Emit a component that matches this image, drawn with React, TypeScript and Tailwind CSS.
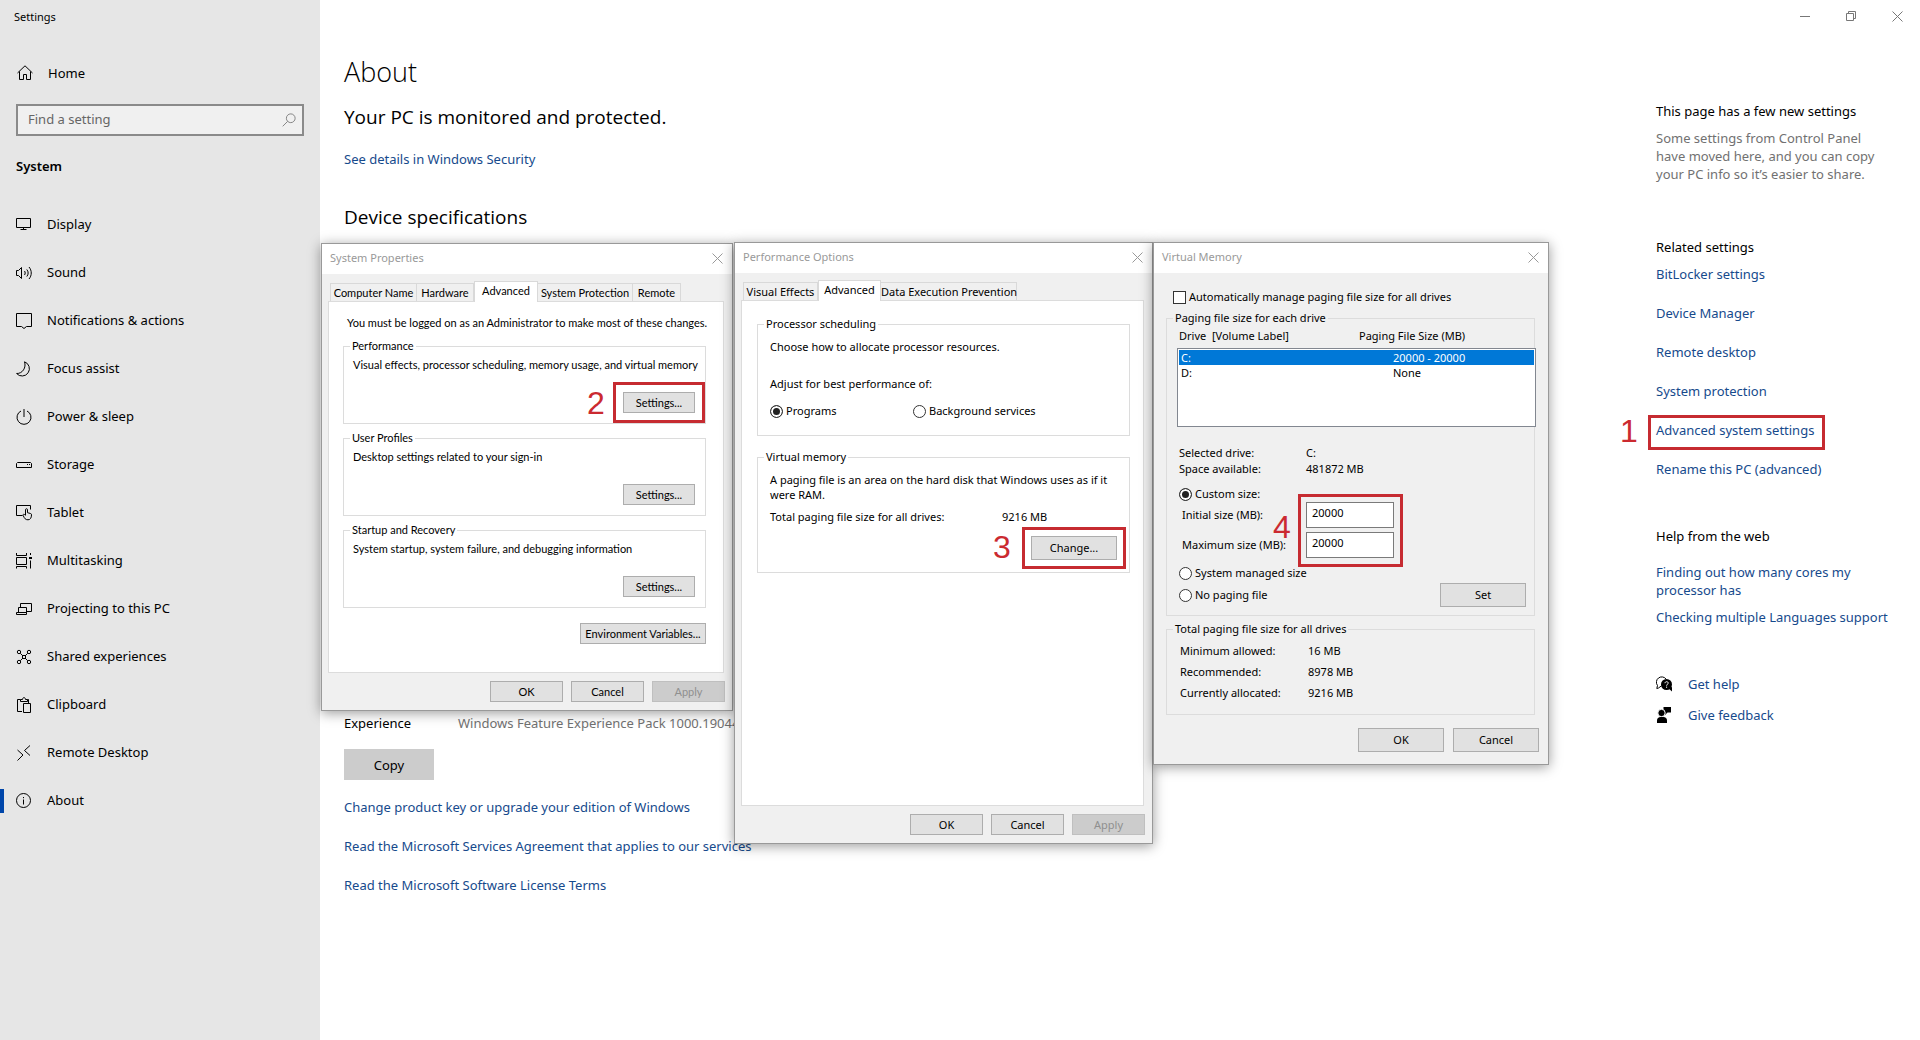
import type { ReactNode } from 'react'

function Icon({ children, size = 16 }: { children: ReactNode; size?: number }) {
  return (
    <svg
      width={size}
      height={size}
      viewBox="0 0 16 16"
      fill="none"
      stroke="currentColor"
      strokeWidth="1"
      className="shrink-0"
      aria-hidden="true"
    >
      {children}
    </svg>
  )
}

const navItems = [
  {
    label: 'Display',
    icon: <path d="M.5 1.500h14v9H.5zM4.500 12.500h6M7.500 10.500v2" />,
  },
  {
    label: 'Sound',
    icon: (
      <path d="M.5 5.500h2L5.500 2.500v11L2.500 10.500h-2zM8.500 6c.9 1.200.9 2.800 0 4M10.800 4.500c1.800 2 1.800 5 0 7M13 2c3 3.500 3 8.500 0 12" />
    ),
  },
  {
    label: 'Notifications & actions',
    icon: <path d="M.5.5h15v13h-5L8 15.500l-2.500-2h-5z" />,
  },
  {
    label: 'Focus assist',
    icon: <path d="M8.500.8a7.300 7.300 0 1 1-7.900 11.700C6.500 12.800 10.500 6.500 8.500.8z" />,
  },
  {
    label: 'Power & sleep',
    icon: <path d="M8 0v8M5 2a7 7 0 1 0 6 0" />,
  },
  {
    label: 'Storage',
    icon: <path d="M1.500 5.500h13l1 1v4H.5v-4zM11 7.500h1M13 7.500h1" />,
  },
  {
    label: 'Tablet',
    icon: (
      <path d="M6.500 10.500h-6v-10h14v4M9.500 10V4.700c0-1.300 2-1.300 2 0v3l3 .8c.8.200 1 .6 1 1.300 0 3-1.200 5-3.500 5-2.500 0-3.500-1.200-5-4.600 0-1.200 1.300-1.400 2.500.3" />
    ),
  },
  {
    label: 'Multitasking',
    icon: (
      <>
        <path d="M.5 0v2.500h10V0M.5 4.500h10v7H.5zM.5 15.500v-2h10v2M14.500 0v2M14.500 7.500v8" />
        <path d="M13 4h3v2h-3z" fill="currentColor" stroke="none" />
      </>
    ),
  },
  {
    label: 'Projecting to this PC',
    icon: <path d="M4.500 6V2.500h11v8h-5M2.500 6.500h8v5h-8zM.5 13.500h10v-2h-10z" />,
  },
  {
    label: 'Shared experiences',
    icon: (
      <>
        <circle cx="3" cy="3" r="1.700" />
        <circle cx="13" cy="3" r="1.700" />
        <circle cx="3" cy="13" r="1.700" />
        <circle cx="13" cy="13" r="1.700" />
        <path d="M4.300 4.300 7 7M11.700 4.300 9 7M4.300 11.700 7 9M11.700 11.700 9 9M6.500 6.500h3v3h-3z" />
      </>
    ),
  },
  {
    label: 'Clipboard',
    icon: <path d="M6 14.500H1.500v-12h3M4.500 4.500v-2h2c0-2.500 3-2.500 3 0h2v2zM11.500 2.500h1V6M7.500 6.500h7v9h-7z" />,
  },
  {
    label: 'Remote Desktop',
    icon: <path d="m1.500 5 5.500 5-5.500 5.500M14 .5 8.500 5.500l5.500 5" />,
  },
  {
    label: 'About',
    icon: (
      <>
        <circle cx="7.500" cy="7.500" r="7" />
        <path d="M7.500 6.500v5M7.500 4v1.200" />
      </>
    ),
    active: true,
  },
]

const relatedLinks = [
  'BitLocker settings',
  'Device Manager',
  'Remote desktop',
  'System protection',
  'Advanced system settings',
  'Rename this PC (advanced)',
]

function CloseIcon({ size = 11 }: { size?: number }) {
  return (
    <svg width={size} height={size} viewBox="0 0 11 11" stroke="currentColor" aria-hidden="true">
      <path d="M.5.5l10 10M10.500.5l-10 10" />
    </svg>
  )
}

function Frame({ className = '' }: { className?: string }) {
  return <span className={`pointer-events-none absolute border-3 border-[#c62b31] ${className}`} />
}

function Step({ n, className = '' }: { n: number; className?: string }) {
  return (
    <span
      className={`pointer-events-none absolute font-['Liberation_Sans',sans-serif] text-[32px] leading-8 text-[#cb2a30] ${className}`}
    >
      {n}
    </span>
  )
}

function Link({ children }: { children: ReactNode }) {
  return (
    <a href="#" className="text-[#164a8c] hover:text-gray-500">
      {children}
    </a>
  )
}

function Dialog({ title, className, children }: { title: string; className: string; children: ReactNode }) {
  return (
    <section
      aria-label={title}
      className={`absolute flex flex-col border border-[#999] bg-[#f0f0f0] text-[11px] leading-4 text-black shadow-[0_2px_12px_rgba(0,0,0,0.4)] ${className}`}
    >
      <header className="flex h-[30px] shrink-0 items-center justify-between bg-white pr-[9px] pb-[2px] pl-2 text-[#999]">
        <span>{title}</span>
        <button aria-label={`Close ${title}`}>
          <CloseIcon />
        </button>
      </header>
      {children}
    </section>
  )
}

function Tabs({ tabs }: { tabs: { label: string; width: string; active?: boolean }[] }) {
  return (
    <div role="tablist" className="flex items-end pt-[7px] pl-[2px]">
      {tabs.map((tab, i) => (
        <button
          key={tab.label}
          role="tab"
          aria-selected={!!tab.active}
          className={`border-t border-r border-[#d9d9d9] whitespace-nowrap ${tab.width} ${
            tab.active ? 'relative -mb-px h-[21px] border-l bg-white pb-[2px]' : 'h-[18px]'
          } ${i === 0 ? 'border-l' : ''}`}
        >
          {tab.label}
        </button>
      ))}
    </div>
  )
}

function PushButton({
  children,
  className,
  disabled,
}: {
  children: ReactNode
  className: string
  disabled?: boolean
}) {
  return (
    <button
      disabled={disabled}
      className={`border border-[#adadad] bg-[#e1e1e1] whitespace-nowrap disabled:border-[#bfbfbf] disabled:bg-[#ccc] disabled:text-[#8f8f8f] ${className}`}
    >
      {children}
    </button>
  )
}

function Group({ legend, className, children }: { legend: string; className: string; children: ReactNode }) {
  return (
    <fieldset className={`min-w-0 border border-[#dcdcdc] pl-[6px] ${className}`}>
      <legend className="px-[2px]">{legend}</legend>
      {children}
    </fieldset>
  )
}

function Radio({ name, label, defaultChecked }: { name: string; label: string; defaultChecked?: boolean }) {
  return (
    <label className="flex items-center gap-[3px]">
      <input
        type="radio"
        name={name}
        defaultChecked={defaultChecked}
        className="size-[13px] appearance-none rounded-full border border-[#333] bg-white checked:bg-[#222] checked:shadow-[inset_0_0_0_2px_#fff]"
      />
      {label}
    </label>
  )
}

function SystemProperties() {
  const groups = [
    { legend: 'Performance', text: 'Visual effects, processor scheduling, memory usage, and virtual memory', marked: true },
    { legend: 'User Profiles', text: 'Desktop settings related to your sign-in' },
    { legend: 'Startup and Recovery', text: 'System startup, system failure, and debugging information' },
  ]

  return (
    <Dialog title="System Properties" className="top-[243px] left-[321px] h-[468px] w-[412px]">
      <div className="flex flex-1 flex-col pr-[7px] pb-2 pl-[6px] font-[Lato,sans-serif]">
        <Tabs
          tabs={[
            { label: 'Computer Name', width: 'w-[87px]' },
            { label: 'Hardware', width: 'w-[57px]' },
            { label: 'Advanced', width: 'w-[64px]', active: true },
            { label: 'System Protection', width: 'w-[95px]' },
            { label: 'Remote', width: 'w-[48px]' },
          ]}
        />
        <div className="mr-px flex-1 border border-[#dcdcdc] bg-white pt-[13px] pr-[17px] pl-[14px]">
          <p className="mb-[7px] pl-1 whitespace-nowrap">
            You must be logged on as an Administrator to make most of these changes.
          </p>
          <div className="flex flex-col gap-[6px]">
            {groups.map((g) => (
              <Group key={g.legend} legend={g.legend} className="pt-[3px] pr-[10px] pb-[10px]">
                <p className="pl-[3px] whitespace-nowrap">{g.text}</p>
                <div className="mt-[19px] flex justify-end">
                  <div className="relative">
                    <PushButton className="h-[21px] w-[72px]">Settings...</PushButton>
                    {g.marked && (
                      <>
                        <Frame className="-inset-[10px]" />
                        <Step n={2} className="-top-[5px] -left-9" />
                      </>
                    )}
                  </div>
                </div>
              </Group>
            ))}
          </div>
          <div className="mt-[15px] flex justify-end">
            <PushButton className="h-[21px] w-[126px]">Environment Variables...</PushButton>
          </div>
        </div>
        <div className="mt-2 flex justify-end gap-2">
          <PushButton className="h-[21px] w-[73px]">OK</PushButton>
          <PushButton className="h-[21px] w-[73px]">Cancel</PushButton>
          <PushButton className="h-[21px] w-[73px]" disabled>
            Apply
          </PushButton>
        </div>
      </div>
    </Dialog>
  )
}

function PerformanceOptions() {
  return (
    <Dialog title="Performance Options" className="top-[242px] left-[734px] h-[602px] w-[419px]">
      <div className="flex flex-1 flex-col pr-[7px] pb-2 pl-[6px]">
        <Tabs
          tabs={[
            { label: 'Visual Effects', width: 'w-[75px]' },
            { label: 'Advanced', width: 'w-[63px]', active: true },
            { label: 'Data Execution Prevention', width: 'w-[136px]' },
          ]}
        />
        <div className="mr-px flex-1 border border-[#dcdcdc] bg-white pt-[15px] pr-[13px] pl-[15px]">
          <Group legend="Processor scheduling" className="pt-[7px] pb-4">
            <div className="pl-[6px]">
              <p>Choose how to allocate processor resources.</p>
              <p className="mt-[21px]">Adjust for best performance of:</p>
              <div className="mt-[11px] grid grid-cols-[143px_1fr]">
                <Radio name="adjust" label="Programs" defaultChecked />
                <Radio name="adjust" label="Background services" />
              </div>
            </div>
          </Group>
          <Group legend="Virtual memory" className="mt-[13px] pt-[7px] pr-3 pb-3">
            <div className="pl-[6px]">
              <p className="leading-[15px]">
                A paging file is an area on the hard disk that Windows uses as if it were RAM.
              </p>
              <div className="mt-[7px] grid grid-cols-[232px_1fr]">
                <span>Total paging file size for all drives:</span>
                <span>9216 MB</span>
              </div>
              <div className="mt-[11px] flex justify-end">
                <div className="relative">
                  <PushButton className="h-6 w-[86px]">Change...</PushButton>
                  <Frame className="-inset-[9px]" />
                  <Step n={3} className="-top-[5px] -left-[38px]" />
                </div>
              </div>
            </div>
          </Group>
        </div>
        <div className="mt-2 flex justify-end gap-2">
          <PushButton className="h-[21px] w-[73px]">OK</PushButton>
          <PushButton className="h-[21px] w-[73px]">Cancel</PushButton>
          <PushButton className="h-[21px] w-[73px]" disabled>
            Apply
          </PushButton>
        </div>
      </div>
    </Dialog>
  )
}

function VirtualMemory() {
  return (
    <Dialog title="Virtual Memory" className="top-[242px] left-[1153px] w-[396px]">
      <div className="pt-4 pr-[13px] pb-3 pl-3">
        <label className="flex items-center gap-[3px] pl-[7px]">
          <input type="checkbox" className="size-[13px] appearance-none border border-[#333] bg-white" />
          Automatically manage paging file size for all drives
        </label>

        <Group legend="Paging file size for each drive" className="mt-[5px] pt-[2px] pr-2 pb-2">
          <table className="ml-1 block w-[359px]">
            <thead className="block">
              <tr className="grid grid-cols-[180px_1fr] pl-[2px] text-left">
                <th className="font-normal">Drive&nbsp; [Volume Label]</th>
                <th className="font-normal">Paging File Size (MB)</th>
              </tr>
            </thead>
            <tbody className="mt-1 block h-[79px] border border-[#828790] bg-white p-px leading-[15px]">
              <tr className="grid grid-cols-[212px_1fr] bg-[#0078d7] pl-[2px] text-white">
                <td>C:</td>
                <td>20000 - 20000</td>
              </tr>
              <tr className="grid grid-cols-[212px_1fr] pl-[2px]">
                <td>D:</td>
                <td>None</td>
              </tr>
            </tbody>
          </table>

          <div className="mt-[18px] grid grid-cols-[127px_1fr] pl-[6px]">
            <span>Selected drive:</span>
            <span>C:</span>
            <span>Space available:</span>
            <span>481872 MB</span>
          </div>

          <div className="mt-[9px] pl-[6px]">
            <Radio name="paging" label="Custom size:" defaultChecked />
            <div className="relative grid w-[215px] grid-cols-[124px_88px] items-center gap-y-1 pl-[3px]">
              <label htmlFor="initial">Initial size (MB):</label>
              <input
                id="initial"
                defaultValue="20000"
                className="h-[26px] border border-[#7a7a7a] bg-white px-[5px] pb-[6px]"
              />
              <label htmlFor="maximum">Maximum size (MB):</label>
              <input
                id="maximum"
                defaultValue="20000"
                className="h-[26px] border border-[#7a7a7a] bg-white px-[5px] pb-[6px]"
              />
              <Frame className="-top-2 -right-[9px] -bottom-[9px] left-[119px]" />
              <Step n={4} className="top-[9px] left-[94px]" />
            </div>
          </div>

          <div className="mt-[7px] flex items-end justify-between pl-[6px]">
            <div className="flex flex-col gap-[6px] pb-1">
              <Radio name="paging" label="System managed size" />
              <Radio name="paging" label="No paging file" />
            </div>
            <PushButton className="h-6 w-[86px]">Set</PushButton>
          </div>
        </Group>

        <Group legend="Total paging file size for all drives" className="mt-[5px] pt-[3px] pb-[11px]">
          <div className="grid grid-cols-[128px_1fr] pl-[7px] leading-[21px]">
            <span>Minimum allowed:</span>
            <span>16 MB</span>
            <span>Recommended:</span>
            <span>8978 MB</span>
            <span>Currently allocated:</span>
            <span>9216 MB</span>
          </div>
        </Group>

        <div className="mt-[13px] -mr-1 flex justify-end gap-[9px]">
          <PushButton className="h-6 w-[86px]">OK</PushButton>
          <PushButton className="h-6 w-[86px]">Cancel</PushButton>
        </div>
      </div>
    </Dialog>
  )
}

function Sidebar() {
  return (
    <aside className="w-[320px] shrink-0 bg-[#e6e6e6] pt-[9px]">
      <div className="pl-[14px] text-[11px] leading-4">Settings</div>
      <a href="#" className="mt-[38px] flex items-center gap-[15px] pl-[17px] leading-5">
        <Icon>
          <path d="M.5 8 8 .8 15.500 8M2.500 6.500v8h4v-5h3v5h4v-8" />
        </Icon>
        Home
      </a>
      <div className="mx-4 mt-[21px] flex h-8 items-center border-2 border-[#8a8a8a] bg-[#f0f0f0] pr-[6px] pl-[10px]">
        <input
          type="text"
          aria-label="Find a setting"
          placeholder="Find a setting"
          className="min-w-0 flex-1 bg-transparent outline-none placeholder:text-[#666]"
        />
        <span className="text-[#777]">
          <Icon size={14}>
            <circle cx="10" cy="6" r="5" />
            <path d="M6.500 9.500.8 15.200" />
          </Icon>
        </span>
      </div>
      <h2 className="mt-5 pl-4 leading-5 font-semibold">System</h2>
      <nav className="mt-[25px]">
        {navItems.map((item) => (
          <a key={item.label} href="#" className="relative flex h-12 items-center gap-[15px] pl-4">
            {item.active && <span className="absolute left-0 h-6 w-1 bg-[#0046aa]" />}
            <Icon>{item.icon}</Icon>
            {item.label}
          </a>
        ))}
      </nav>
    </aside>
  )
}

function RightColumn() {
  return (
    <aside className="w-[264px] shrink-0 pt-[67px] pr-6 leading-5">
      <h3>This page has a few new settings</h3>
      <p className="mt-2 max-w-[232px] leading-[18px] text-[#717171]">
        Some settings from Control Panel have moved here, and you can copy your PC info so it’s easier to share.
      </p>

      <h3 className="mt-[54px]">Related settings</h3>
      <ul className="mt-[7px] flex flex-col gap-[19px]">
        {relatedLinks.map((label) => (
          <li key={label} className="relative">
            <Link>{label}</Link>
            {label === 'Advanced system settings' && (
              <>
                <Frame className="-top-[5px] -bottom-[10px] -left-2 w-[177px]" />
                <Step n={1} className="-top-[5px] -left-9" />
              </>
            )}
          </li>
        ))}
      </ul>

      <h3 className="mt-[47px]">Help from the web</h3>
      <ul className="mt-[17px] flex flex-col gap-[9px] leading-[18px]">
        <li>
          <Link>Finding out how many cores my processor has</Link>
        </li>
        <li className="whitespace-nowrap">
          <Link>Checking multiple Languages support</Link>
        </li>
      </ul>

      <div className="mt-12 flex items-center gap-4">
        <Icon>
          <path d="M5.500 9.800 2.500 12 .8 12.500l.7-3A5 5 0 1 1 10 3" />
          <circle cx="10.500" cy="8.500" r="5.500" fill="currentColor" stroke="none" />
          <path d="m12 12 4 3.500V11z" fill="currentColor" stroke="none" />
          <path d="M9 7.200c0-2 3.200-2 3.200-.1 0 1.200-1.600 1.200-1.600 2.600M10.600 10.600v1.200" stroke="#fff" />
        </Icon>
        <Link>Get help</Link>
      </div>
      <div className="mt-[11px] flex items-center gap-4">
        <Icon>
          <g fill="currentColor" stroke="none">
            <path d="M7.500 0H15v5.500h-3.500L9 8V5.500H7.500z" />
            <circle cx="5.500" cy="6" r="3.700" stroke="#fff" />
            <path d="M1 16v-2.500C1 11.500 2.500 10 4.500 10h3C9.500 10 11 11.500 11 13.500V16z" />
          </g>
        </Icon>
        <Link>Give feedback</Link>
      </div>
    </aside>
  )
}

export default function App() {
  return (
    <div className="relative flex min-h-screen overflow-hidden bg-white font-['Noto_Sans',sans-serif] text-[13px] text-black">
      <Sidebar />

      <div className="flex min-w-0 flex-1 flex-col">
        <div className="flex h-[34px] items-start justify-end text-[#777]">
          <button aria-label="Minimize" className="flex h-8 w-[46px] items-center justify-center">
            <svg width="10" height="10" stroke="currentColor">
              <path d="M0 5.500h10" />
            </svg>
          </button>
          <button aria-label="Restore" className="flex h-8 w-[46px] items-center justify-center">
            <svg width="10" height="10" fill="none" stroke="currentColor">
              <path d="M.5 2.500h7v7h-7zM2.500 2.500v-2h7v7h-2" />
            </svg>
          </button>
          <button aria-label="Close" className="flex h-8 w-[46px] items-center justify-center">
            <CloseIcon />
          </button>
        </div>

        <div className="flex flex-1">
          <main className="min-w-0 flex-1 pt-5 pl-6 leading-5">
            <h1 className="font-['Open_Sans',sans-serif] text-[27px] leading-9 font-light">About</h1>
            <h2 className="mt-[13px] font-['Open_Sans',sans-serif] text-[19px] leading-7">
              Your PC is monitored and protected.
            </h2>
            <p className="mt-[18px]">
              <Link>See details in Windows Security</Link>
            </p>
            <h2 className="mt-[34px] font-['Open_Sans',sans-serif] text-[19px] leading-7">Device specifications</h2>
            <dl className="grid min-h-[502px] grid-cols-[114px_1fr] items-end">
              <dt>Experience</dt>
              <dd className="text-[#717171]">Windows Feature Experience Pack 1000.19044</dd>
            </dl>
            <button className="mt-4 h-[31px] w-[90px] bg-[#ccc]">Copy</button>
            <div className="mt-[17px] flex flex-col items-start gap-[19px]">
              <Link>Change product key or upgrade your edition of Windows</Link>
              <Link>Read the Microsoft Services Agreement that applies to our services</Link>
              <Link>Read the Microsoft Software License Terms</Link>
            </div>
          </main>
          <RightColumn />
        </div>
      </div>

      <SystemProperties />
      <PerformanceOptions />
      <VirtualMemory />
    </div>
  )
}
